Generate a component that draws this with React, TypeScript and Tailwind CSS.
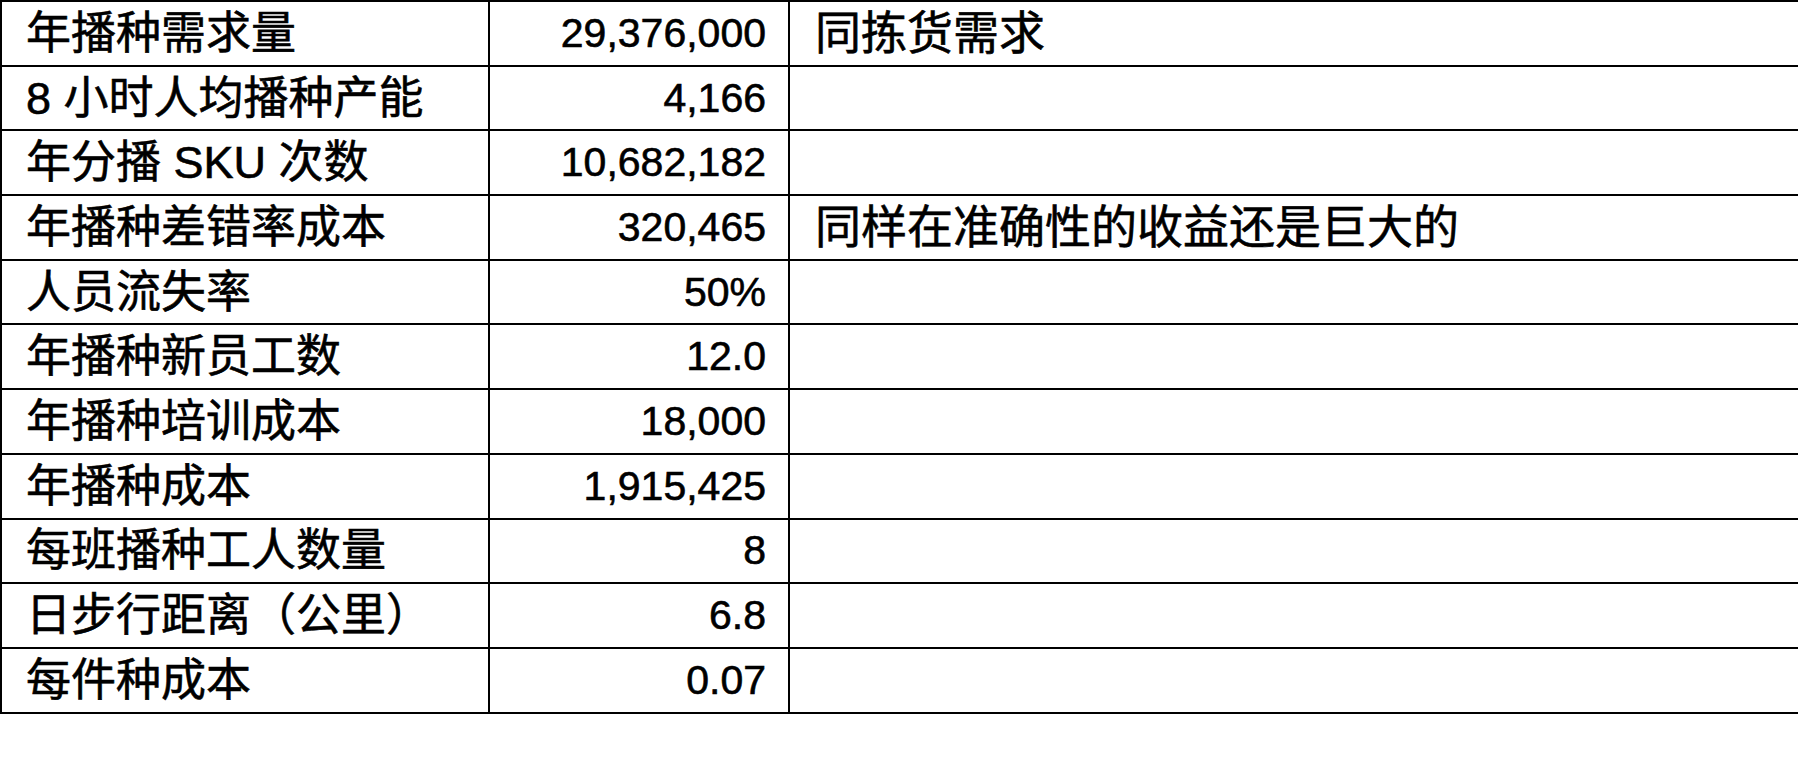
const ROWS: { label: string; value: string; note?: string }[] = [
  { label: '年播种需求量', value: '29,376,000', note: '同拣货需求' },
  { label: '8 小时人均播种产能', value: '4,166' },
  { label: '年分播 SKU 次数', value: '10,682,182' },
  { label: '年播种差错率成本', value: '320,465', note: '同样在准确性的收益还是巨大的' },
  { label: '人员流失率', value: '50%' },
  { label: '年播种新员工数', value: '12.0' },
  { label: '年播种培训成本', value: '18,000' },
  { label: '年播种成本', value: '1,915,425' },
  { label: '每班播种工人数量', value: '8' },
  { label: '日步行距离（公里）', value: '6.8' },
  { label: '每件种成本', value: '0.07' },
]

export default function App() {
  return (
    <div className="w-full h-[774px] overflow-hidden bg-white text-black font-['Liberation_Sans','Noto_Sans_CJK_SC',sans-serif] [-webkit-text-stroke:0.6px_black]">
      <table className="border-collapse table-fixed w-[1802px]">
        <colgroup>
          <col className="w-[488px]" />
          <col className="w-[300px]" />
          <col />
        </colgroup>
        <tbody>
          {ROWS.map((row) => (
            <tr key={row.label} className="h-[64.7px]">
              <td className="border-2 border-black pl-[24px] text-[45px] leading-none whitespace-nowrap">
                {row.label}
              </td>
              <td className="border-2 border-black pr-[22px] text-right text-[41px] leading-none">
                {row.value}
              </td>
              <td className="border-2 border-black pl-[25px] text-[46px] leading-none whitespace-nowrap">
                {row.note}
              </td>
            </tr>
          ))}
        </tbody>
      </table>
    </div>
  )
}
